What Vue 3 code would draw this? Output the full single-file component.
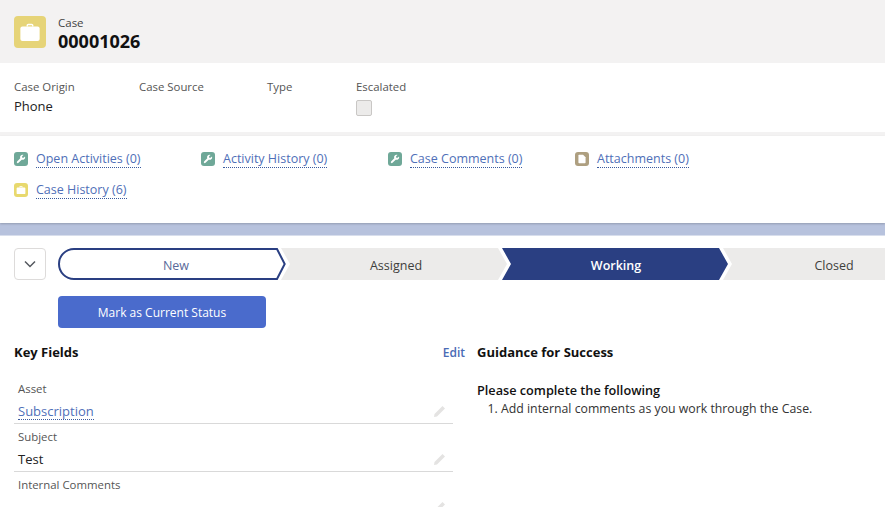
<script setup>
const highlights = [
  { label: 'Case Origin', value: 'Phone', width: 125 },
  { label: 'Case Source', value: '', width: 128 },
  { label: 'Type', value: '', width: 89 },
]

const relatedLists = [
  { label: 'Open Activities (0)', kind: 'wrench' },
  { label: 'Activity History (0)', kind: 'wrench' },
  { label: 'Case Comments (0)', kind: 'wrench' },
  { label: 'Attachments (0)', kind: 'file' },
  { label: 'Case History (6)', kind: 'case' },
]

const stages = [
  { label: 'New', state: 'current' },
  { label: 'Assigned', state: '' },
  { label: 'Working', state: 'active' },
  { label: 'Closed', state: '' },
]

const fields = [
  { label: 'Asset', value: 'Subscription', link: true },
  { label: 'Subject', value: 'Test', link: false },
  { label: 'Internal Comments', value: '', link: false },
]
</script>

<template>
  <div class="page">
    <header class="page-header">
      <div class="case-icon">
        <svg viewBox="0 0 32 32" width="22" height="22">
          <path d="M11 8V6.5C11 5.1 12.1 4 13.5 4h5C19.9 4 21 5.1 21 6.5V8h-2V6.5c0-.3-.2-.5-.5-.5h-5c-.3 0-.5.2-.5.5V8z" fill="#fff" />
          <rect x="2" y="8" width="28" height="21" rx="3" fill="#fff" />
        </svg>
      </div>
      <div class="title-block">
        <div class="entity">Case</div>
        <div class="record">00001026</div>
      </div>
    </header>

    <section class="highlights">
      <div v-for="h in highlights" :key="h.label" class="highlight" :style="{ width: h.width + 'px' }">
        <div class="hl-label">{{ h.label }}</div>
        <div class="hl-value">{{ h.value }}</div>
      </div>
      <div class="highlight">
        <div class="hl-label">Escalated</div>
        <div class="checkbox"></div>
      </div>
    </section>

    <section class="related">
      <div v-for="r in relatedLists" :key="r.label" class="related-item">
        <span class="mini-icon" :class="r.kind">
          <svg v-if="r.kind === 'wrench'" viewBox="0 0 14 14" width="10" height="10">
            <path d="M12.6 3.4 10.6 5.4 8.7 5.2 8.5 3.3 10.5 1.3C9 .8 7.3 1.2 6.4 2.4 5.6 3.4 5.5 4.7 6 5.9L1.5 10.4C.9 11 .9 11.9 1.5 12.4 2 13 2.9 13 3.5 12.4L8 7.9C9.2 8.4 10.5 8.3 11.5 7.5 12.7 6.6 13.1 4.9 12.6 3.4Z" fill="#fff" />
          </svg>
          <svg v-else-if="r.kind === 'file'" viewBox="0 0 14 14" width="10" height="10">
            <path d="M3 1h5.5L12 4.5V12c0 .6-.4 1-1 1H3c-.6 0-1-.4-1-1V2c0-.6.4-1 1-1Z" fill="#fff" />
          </svg>
          <svg v-else viewBox="0 0 32 32" width="10" height="10">
            <path d="M11 8V5.5C11 4.1 12.1 3 13.5 3h5C19.9 3 21 4.1 21 5.5V8h-2.5V5.5h-5V8z" fill="#fff" />
            <rect x="2" y="8" width="28" height="21" rx="3" fill="#fff" />
          </svg>
        </span>
        <a class="link">{{ r.label }}</a>
      </div>
    </section>

    <div class="band"></div>

    <section class="path-row">
      <button class="toggle">
        <svg viewBox="0 0 14 14" width="14" height="14">
          <path d="M2 4.5 7 9.5 12 4.5" fill="none" stroke="#54585f" stroke-width="1.5" />
        </svg>
      </button>
      <div class="stages">
        <div v-for="s in stages" :key="s.label" class="stage" :class="s.state">
          <svg v-if="s.state === 'current'" class="outline" viewBox="0 0 228 32" width="228" height="32">
            <path d="M16 1H219L226.700 16 219 31H16C7.700 31 1 24.300 1 16S7.700 1 16 1Z" fill="#fff" stroke="#2a3f82" stroke-width="2" />
          </svg>
          <span class="stage-label">{{ s.label }}</span>
        </div>
      </div>
    </section>

    <div class="action-row">
      <button class="mark-btn">Mark as Current Status</button>
    </div>

    <section class="details">
      <div class="key-fields">
        <div class="section-head">
          <h2>Key Fields</h2>
          <a class="edit">Edit</a>
        </div>
        <div class="field-list">
          <div v-for="f in fields" :key="f.label" class="field">
            <div class="field-label">{{ f.label }}</div>
            <div class="field-value">
              <a v-if="f.link" class="link">{{ f.value }}</a>
              <span v-else>{{ f.value }}</span>
              <svg class="pencil" viewBox="0 0 14 14" width="14" height="14">
                <path d="M1.5 10 9.500 2 12 4.500 4 12.500 1 13Z" fill="#e4e3e2" />
              </svg>
            </div>
          </div>
        </div>
      </div>
      <div class="guidance">
        <h2>Guidance for Success</h2>
        <p class="guidance-lead">Please complete the following</p>
        <ol>
          <li>Add internal comments as you work through the Case.</li>
        </ol>
      </div>
    </section>
  </div>
</template>

<style>
html,
body {
  margin: 0;
  background: #fff;
  overflow: hidden;
}
</style>

<style scoped>
.page {
  width: 885px;
  height: 507px;
  overflow: hidden;
  font-family: "Open Sans", "Noto Sans", sans-serif;
  font-size: 12.5px;
  color: #222;
  background: #fff;
}

.page-header {
  height: 63px;
  box-sizing: border-box;
  padding: 16px 14px 0;
  display: flex;
  gap: 12px;
  background: #f3f2f2;
}

.case-icon {
  width: 32px;
  height: 32px;
  border-radius: 4px;
  background: #e6d478;
  display: flex;
  align-items: center;
  justify-content: center;
}

.entity {
  font-size: 11.5px;
  line-height: 14px;
  color: #444;
}

.record {
  margin-top: 1px;
  font-size: 18px;
  line-height: 20px;
  font-weight: 700;
  color: #111;
}

.highlights {
  height: 73px;
  box-sizing: border-box;
  padding: 16px 14px 0;
  display: flex;
  border-bottom: 4px solid #f3f2f2;
}

.hl-label {
  font-size: 11.4px;
  line-height: 15px;
  color: #555;
}

.hl-value {
  margin-top: 3px;
  font-size: 13px;
  line-height: 18px;
  color: #222;
}

.checkbox {
  width: 14px;
  height: 14px;
  margin-top: 6px;
  border: 1px solid #c9c7c5;
  border-radius: 2px;
  background: #ecebea;
}

.related {
  height: 87px;
  box-sizing: border-box;
  padding: 13px 14px 0;
  display: flex;
  flex-wrap: wrap;
  align-content: flex-start;
  row-gap: 11px;
  box-shadow: 0 1px 2px rgba(0, 0, 0, 0.2);
  position: relative;
}

.related-item {
  width: 187px;
  height: 20px;
  display: flex;
  align-items: center;
  gap: 8px;
}

.mini-icon {
  width: 14px;
  height: 14px;
  border-radius: 3px;
  display: flex;
  align-items: center;
  justify-content: center;
}

.mini-icon.wrench {
  background: #6fa898;
}

.mini-icon.file {
  background: #ae9f80;
}

.mini-icon.case {
  background: #e8d96e;
}

.link {
  color: #4f6fb8;
  font-size: 12.5px;
  line-height: 16px;
  border-bottom: 1px dotted #3a5a9e;
}

.band {
  height: 12px;
  background: #b7c2dd;
  border-bottom: 1px solid #d8deec;
}

.path-row {
  margin-top: 12px;
  padding-left: 14px;
  display: flex;
  gap: 12px;
}

.toggle {
  width: 32px;
  height: 32px;
  padding: 0;
  border: 1px solid #dddbda;
  border-radius: 4px;
  background: #fff;
  display: flex;
  align-items: center;
  justify-content: center;
}

.stages {
  flex: 1;
  display: flex;
  overflow: hidden;
  min-width: 0;
}

.stage {
  flex: 0 0 226px;
  height: 32px;
  box-sizing: border-box;
  padding: 3px 0 0 4px;
  margin-left: -5px;
  position: relative;
  display: flex;
  align-items: center;
  justify-content: center;
  background: #ecebea;
  color: #3e3e3c;
  clip-path: polygon(0 0, calc(100% - 9px) 0, 100% 50%, calc(100% - 9px) 100%, 0 100%, 9px 50%);
}

.stage:last-child {
  padding: 3px 4px 0 0;
}

.stage.current {
  flex-basis: 228px;
  margin-left: 0;
  padding-left: 0;
  background: none;
  color: #5a6a9a;
  clip-path: none;
  z-index: 1;
}

.stage.current .stage-label {
  padding-left: 8px;
}

.stage.active {
  padding-left: 2px;
  background: #2a3f82;
  color: #fff;
  font-weight: 600;
}

.outline {
  position: absolute;
  top: 0;
  left: 0;
}

.stage-label {
  position: relative;
}

.action-row {
  margin-top: 16px;
  padding-left: 58px;
}

.mark-btn {
  width: 208px;
  height: 32px;
  border: 0;
  border-radius: 4px;
  background: #4a6bcc;
  color: #fff;
  font-family: inherit;
  font-size: 12px;
  font-weight: 500;
}

.details {
  margin-top: 16px;
  padding-left: 14px;
  display: flex;
  gap: 12px;
}

.key-fields {
  width: 451px;
}

.section-head {
  display: flex;
  justify-content: space-between;
  align-items: center;
  height: 17px;
}

h2 {
  margin: 0;
  font-size: 13px;
  line-height: 17px;
  font-weight: 700;
  color: #111;
}

.edit {
  color: #4a6bb5;
  font-size: 12px;
  font-weight: 600;
}

.field-list {
  margin-top: 15px;
  width: 439px;
}

.field {
  height: 48px;
  box-sizing: border-box;
  padding: 5px 4px 0;
  border-bottom: 1px solid #d9d9d9;
}

.field:last-child {
  border-bottom: 0;
}

.field-label {
  font-size: 11.4px;
  line-height: 15px;
  color: #555;
}

.field-value {
  height: 22px;
  margin-top: 4px;
  display: flex;
  align-items: center;
  justify-content: space-between;
  font-size: 13px;
  color: #222;
}

.field-value .link {
  font-size: 13px;
}

.pencil {
  margin-right: 2px;
}

.guidance-lead {
  margin: 21px 0 0;
  font-size: 12.7px;
  line-height: 16px;
  font-weight: 600;
  color: #111;
}

ol {
  margin: 3px 0 0;
  padding-left: 24px;
  font-size: 12.3px;
  line-height: 16px;
  color: #333;
}
</style>
